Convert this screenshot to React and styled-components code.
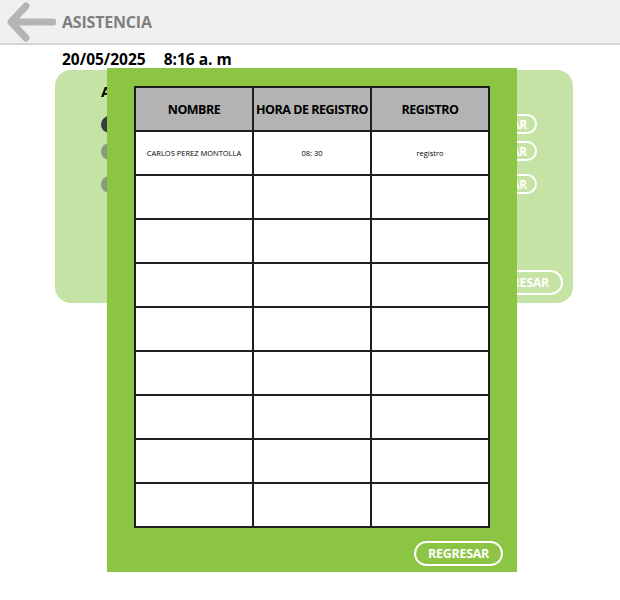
import React from "react";
import styled, { createGlobalStyle } from "styled-components";

const GlobalStyle = createGlobalStyle`
  body {
    margin: 0;
    background: #ffffff;
    font-family: "Open Sans", "Liberation Sans", sans-serif;
  }
`;

const Page = styled.div`
  position: relative;
  width: 620px;
  height: 600px;
  overflow: hidden;
`;

const TopBar = styled.div`
  height: 43px;
  background: #f0f0f0;
  border-bottom: 2px solid #d4d4d4;
  display: flex;
  align-items: center;
  gap: 6px;
  padding-left: 6px;

  h1 {
    margin: 0;
    font-size: 16px;
    font-weight: 700;
    color: #7f7f7f;
    font-family: "Open Sans", sans-serif;
    letter-spacing: -0.2px;
  }
`;

const DateRow = styled.div`
  display: flex;
  gap: 18px;
  padding: 3px 0 0 62px;
  height: 22px;
  font-size: 15.5px;
  font-weight: 700;
  color: #000;
`;

const Card = styled.div`
  margin-left: 55px;
  width: 518px;
  height: 233px;
  background: #c5e3a5;
  border-radius: 16px;
  box-sizing: border-box;
  padding: 11px 10px 8px 46px;
  display: flex;
  flex-direction: column;
`;

const CardTitle = styled.div`
  font-size: 15px;
  font-weight: 700;
  color: #000;
  margin-bottom: 13px;
`;

const PersonRow = styled.div`
  display: flex;
  align-items: center;
  justify-content: space-between;
  height: 20px;
  margin-bottom: ${(p) => p.$gap}px;
  padding-right: 26px;
`;

const Dot = styled.span`
  width: 17px;
  height: 17px;
  border-radius: 50%;
  background: ${(p) => (p.$dark ? "#343c46" : "#8b9c7e")};
`;

const OutlineButton = styled.button`
  border: 2px solid #ffffff;
  border-radius: 14px;
  background: transparent;
  color: #ffffff;
  font-family: "Open Sans", sans-serif;
  font-weight: 700;
  font-size: ${(p) => (p.$big ? 12.5 : 12)}px;
  padding: 0 ${(p) => (p.$big ? 12 : 8)}px;
  height: ${(p) => (p.$big ? 25 : 20)}px;
  cursor: pointer;
  letter-spacing: -0.3px;
`;

const CardFooter = styled.div`
  margin-top: auto;
  display: flex;
  justify-content: flex-end;
`;

const Modal = styled.div`
  position: absolute;
  left: 107px;
  top: 68px;
  width: 410px;
  height: 504px;
  background: #8bc543;
  box-sizing: border-box;
  padding: 18px 14px 0 27px;
  display: flex;
  flex-direction: column;
`;

const Table = styled.table`
  width: 356px;
  border-collapse: collapse;
  table-layout: fixed;
  background: #fff;

  th,
  td {
    border: 2px solid #1e1e1e;
    text-align: center;
    padding: 0;
    height: 42px;
    font-family: "Open Sans", sans-serif;
  }

  th {
    background: #b3b3b3;
    font-size: 12.5px;
    font-weight: 700;
    color: #000;
    letter-spacing: -0.5px;
    white-space: nowrap;
  }

  td {
    font-size: 7.5px;
    color: #000;
  }
`;

const ModalFooter = styled.div`
  display: flex;
  justify-content: flex-end;
  margin-top: 13px;
`;

const BackArrow = () => (
  <svg width="50" height="40" viewBox="0 0 50 40">
    <path
      d="M47 20 H5 M20 4 L5 20 L20 36"
      fill="none"
      stroke="#b5b5b5"
      strokeWidth="7"
      strokeLinecap="round"
      strokeLinejoin="round"
    />
  </svg>
);

const rows = [
  { name: "CARLOS PEREZ MONTOLLA", hora: "08: 30", reg: "registro" },
  ...Array.from({ length: 8 }, () => ({ name: "", hora: "", reg: "" })),
];

const App = () => {
  return (
    <Page>
      <GlobalStyle />
      <TopBar>
        <BackArrow />
        <h1>ASISTENCIA</h1>
      </TopBar>
      <DateRow>
        <span>20/05/2025</span>
        <span>8:16 a. m</span>
      </DateRow>
      <Card>
        <CardTitle>ASISTENCIA</CardTitle>
        <PersonRow $gap={7}>
          <Dot $dark />
          <OutlineButton>REGISTRAR</OutlineButton>
        </PersonRow>
        <PersonRow $gap={13}>
          <Dot />
          <OutlineButton>REGISTRAR</OutlineButton>
        </PersonRow>
        <PersonRow $gap={0}>
          <Dot />
          <OutlineButton>REGISTRAR</OutlineButton>
        </PersonRow>
        <CardFooter>
          <OutlineButton $big>REGRESAR</OutlineButton>
        </CardFooter>
      </Card>
      <Modal>
        <Table>
          <thead>
            <tr>
              <th>NOMBRE</th>
              <th>HORA DE REGISTRO</th>
              <th>REGISTRO</th>
            </tr>
          </thead>
          <tbody>
            {rows.map((r, i) => (
              <tr key={i}>
                <td>{r.name}</td>
                <td>{r.hora}</td>
                <td>{r.reg}</td>
              </tr>
            ))}
          </tbody>
        </Table>
        <ModalFooter>
          <OutlineButton $big>REGRESAR</OutlineButton>
        </ModalFooter>
      </Modal>
    </Page>
  );
};

export default App;
